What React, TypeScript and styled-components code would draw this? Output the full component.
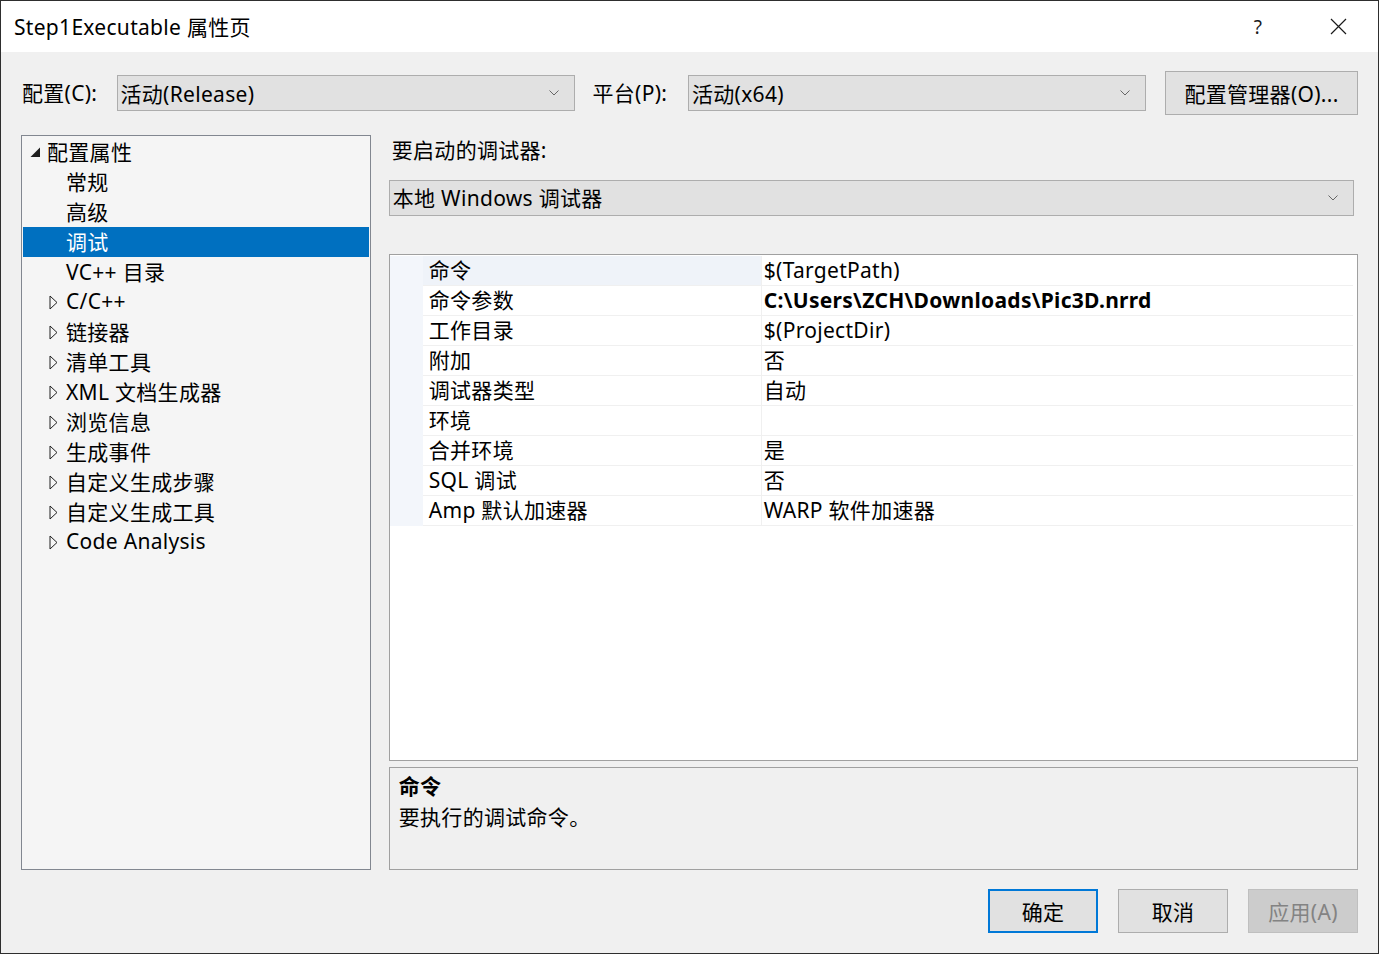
import styled, { createGlobalStyle } from "styled-components";

const GlobalStyle = createGlobalStyle`
  html, body {
    margin: 0;
    padding: 0;
    background: #f0f0f0;
  }
  body {
    font-family: "Noto Sans", "Noto Sans CJK SC", sans-serif;
    letter-spacing: 0.3px;
    color: #000;
  }
  * {
    box-sizing: border-box;
  }
`;

const Window = styled.div`
  width: 1379px;
  height: 954px;
  border: 1px solid #2e2e2e;
  background: #f0f0f0;
  display: flex;
  flex-direction: column;
  overflow: hidden;
`;

const TitleBar = styled.div`
  height: 51px;
  background: #ffffff;
  display: flex;
  align-items: center;
  padding-left: 13px;
  flex-shrink: 0;
`;

const Title = styled.div`
  flex: 1;
  font-size: 21px;
  line-height: 26px;
  padding-top: 1px;
`;

const TitleButton = styled.div`
  width: 80px;
  height: 51px;
  display: flex;
  align-items: center;
  justify-content: center;
  font-size: 19px;
  color: #1a1a1a;
`;

const Content = styled.div`
  flex: 1;
  display: flex;
  flex-direction: column;
  padding: 19px 20px 0 20px;
`;

const ConfigRow = styled.div`
  display: flex;
  align-items: center;
  height: 44px;
`;

const Label = styled.div<{ width: string; lead?: string }>`
  width: ${(p) => p.width};
  font-size: 21px;
  line-height: 28px;
  padding-left: ${(p) => p.lead || "1px"};
  white-space: nowrap;
`;

const Combo = styled.div<{ width: string }>`
  width: ${(p) => p.width};
  height: 36px;
  background: #e1e1e1;
  border: 1px solid #adadad;
  display: flex;
  align-items: center;
  padding: 0 14px 0 3px;
  font-size: 21px;
  flex-shrink: 0;
`;

const ComboText = styled.div`
  flex: 1;
  white-space: nowrap;
  padding-bottom: 1px;
`;

const Spacer = styled.div<{ width: string }>`
  width: ${(p) => p.width};
  flex-shrink: 0;
`;

const PushButton = styled.div<{ width: string; primary?: boolean; disabled?: boolean }>`
  width: ${(p) => p.width};
  height: 44px;
  background: ${(p) => (p.disabled ? "#cccccc" : "#e1e1e1")};
  border: ${(p) =>
    p.primary ? "2px solid #0078d7" : p.disabled ? "1px solid #bfbfbf" : "1px solid #adadad"};
  color: ${(p) => (p.disabled ? "#838383" : "#000")};
  display: flex;
  align-items: center;
  justify-content: center;
  font-size: 21px;
  flex-shrink: 0;
  padding-bottom: 1px;
`;

const Main = styled.div`
  display: flex;
  margin-top: 20px;
  gap: 18px;
  height: 735px;
`;

const TreePanel = styled.div`
  width: 350px;
  height: 735px;
  background: #f5f5f5;
  border: 1px solid #828790;
  padding: 1px;
`;

const TreeRow = styled.div<{ selected?: boolean; indent: number }>`
  height: 30px;
  display: flex;
  align-items: center;
  padding-left: ${(p) => p.indent}px;
  background: ${(p) => (p.selected ? "#0070c0" : "transparent")};
  color: ${(p) => (p.selected ? "#ffffff" : "#000")};
  font-size: 21px;
  white-space: nowrap;
`;

const TreeLabel = styled.span`
  margin-left: 1px;
  padding-bottom: 2px;
`;

const Expander = styled.span`
  width: 16px;
  height: 30px;
  display: inline-flex;
  align-items: center;
  justify-content: flex-start;
  flex-shrink: 0;
`;

const RightColumn = styled.div`
  width: 970px;
  display: flex;
  flex-direction: column;
`;

const DebuggerLabel = styled.div`
  font-size: 21px;
  line-height: 30px;
  padding-left: 3px;
  height: 45px;
`;

const GridBox = styled.div`
  margin-top: 38px;
  height: 509px;
  background: #ffffff;
  border: 1px solid #a0a0a0;
  padding-top: 1px;
`;

const PropRow = styled.div`
  display: grid;
  grid-template-columns: 33px 338px 1px 1fr;
  height: 30px;
  margin-right: 4px;
`;

const Gutter = styled.div`
  background: #f3f6fb;
`;

const NameCell = styled.div<{ active?: boolean }>`
  background: ${(p) => (p.active ? "#eff3f9" : "#ffffff")};
  border-bottom: 1px solid #f0f0f0;
  font-size: 21px;
  line-height: 29px;
  padding-left: 6px;
  white-space: nowrap;
`;

const ColumnRule = styled.div`
  background: #f0f0f0;
`;

const ValueCell = styled.div<{ bold?: boolean }>`
  border-bottom: 1px solid #f0f0f0;
  font-size: 21px;
  line-height: 29px;
  padding-left: 2px;
  font-weight: ${(p) => (p.bold ? 700 : 400)};
  white-space: nowrap;
`;

const DescBox = styled.div`
  margin-top: 6px;
  height: 103px;
  border: 1px solid #a0a0a0;
  background: #f0f0f0;
  padding: 3px 9px;
  font-size: 21px;
  line-height: 31px;
`;

const DescTitle = styled.div`
  font-weight: 700;
`;

const ButtonRow = styled.div`
  display: flex;
  justify-content: flex-end;
  gap: 20px;
  margin-top: 19px;
`;

const Chevron = () => (
  <svg width="12" height="8" viewBox="0 0 12 8">
    <polyline points="1.5,1.5 6,6 10.5,1.5" fill="none" stroke="#666" strokeWidth="1" />
  </svg>
);

const OpenArrow = () => (
  <svg width="11" height="11" viewBox="0 0 11 11">
    <polygon points="10,0.5 10,10 0.5,10" fill="#1e1e1e" />
  </svg>
);

const ClosedArrow = () => (
  <svg width="9" height="15" viewBox="0 0 9 15">
    <polygon points="1,1 8,7.5 1,14" fill="none" stroke="#1e1e1e" strokeWidth="1" />
  </svg>
);

const CloseIcon = () => (
  <svg width="17" height="17" viewBox="0 0 17 17">
    <path d="M1 1 L16 16 M16 1 L1 16" stroke="#1a1a1a" strokeWidth="1.2" />
  </svg>
);

type TreeItem = { label: string; level: number; expander?: "open" | "closed"; selected?: boolean };

const treeItems: TreeItem[] = [
  { label: "配置属性", level: 0, expander: "open" },
  { label: "常规", level: 1 },
  { label: "高级", level: 1 },
  { label: "调试", level: 1, selected: true },
  { label: "VC++ 目录", level: 1 },
  { label: "C/C++", level: 1, expander: "closed" },
  { label: "链接器", level: 1, expander: "closed" },
  { label: "清单工具", level: 1, expander: "closed" },
  { label: "XML 文档生成器", level: 1, expander: "closed" },
  { label: "浏览信息", level: 1, expander: "closed" },
  { label: "生成事件", level: 1, expander: "closed" },
  { label: "自定义生成步骤", level: 1, expander: "closed" },
  { label: "自定义生成工具", level: 1, expander: "closed" },
  { label: "Code Analysis", level: 1, expander: "closed" },
];

const props: { name: string; value: string; bold?: boolean }[] = [
  { name: "命令", value: "$(TargetPath)" },
  { name: "命令参数", value: "C:\\Users\\ZCH\\Downloads\\Pic3D.nrrd", bold: true },
  { name: "工作目录", value: "$(ProjectDir)" },
  { name: "附加", value: "否" },
  { name: "调试器类型", value: "自动" },
  { name: "环境", value: "" },
  { name: "合并环境", value: "是" },
  { name: "SQL 调试", value: "否" },
  { name: "Amp 默认加速器", value: "WARP 软件加速器" },
];

const App = () => {
  return (
    <>
      <GlobalStyle />
      <Window>
        <TitleBar>
          <Title>Step1Executable 属性页</Title>
          <TitleButton>?</TitleButton>
          <TitleButton>
            <CloseIcon />
          </TitleButton>
        </TitleBar>
        <Content>
          <ConfigRow>
            <Label width="96px">配置(C):</Label>
            <Combo width="458px">
              <ComboText>活动(Release)</ComboText>
              <Chevron />
            </Combo>
            <Label width="114px" lead="18px">
              平台(P):
            </Label>
            <Combo width="458px">
              <ComboText>活动(x64)</ComboText>
              <Chevron />
            </Combo>
            <Spacer width="19px" />
            <PushButton width="193px">配置管理器(O)...</PushButton>
          </ConfigRow>
          <Main>
            <TreePanel>
              {treeItems.map((t) => (
                <TreeRow key={t.label} selected={t.selected} indent={t.level === 0 ? 7 : 26}>
                  <Expander>
                    {t.level === 0 ? <OpenArrow /> : t.expander === "closed" && <ClosedArrow />}
                  </Expander>
                  <TreeLabel>{t.label}</TreeLabel>
                </TreeRow>
              ))}
            </TreePanel>
            <RightColumn>
              <DebuggerLabel>要启动的调试器:</DebuggerLabel>
              <Combo width="965px">
                <ComboText>本地 Windows 调试器</ComboText>
                <Chevron />
              </Combo>
              <GridBox>
                {props.map((p, i) => (
                  <PropRow key={p.name}>
                    <Gutter />
                    <NameCell active={i === 0}>{p.name}</NameCell>
                    <ColumnRule />
                    <ValueCell bold={p.bold}>{p.value}</ValueCell>
                  </PropRow>
                ))}
              </GridBox>
              <DescBox>
                <DescTitle>命令</DescTitle>
                <div>要执行的调试命令。</div>
              </DescBox>
            </RightColumn>
          </Main>
          <ButtonRow>
            <PushButton width="110px" primary>
              确定
            </PushButton>
            <PushButton width="110px">取消</PushButton>
            <PushButton width="110px" disabled>
              应用(A)
            </PushButton>
          </ButtonRow>
        </Content>
      </Window>
    </>
  );
};

export default App;
